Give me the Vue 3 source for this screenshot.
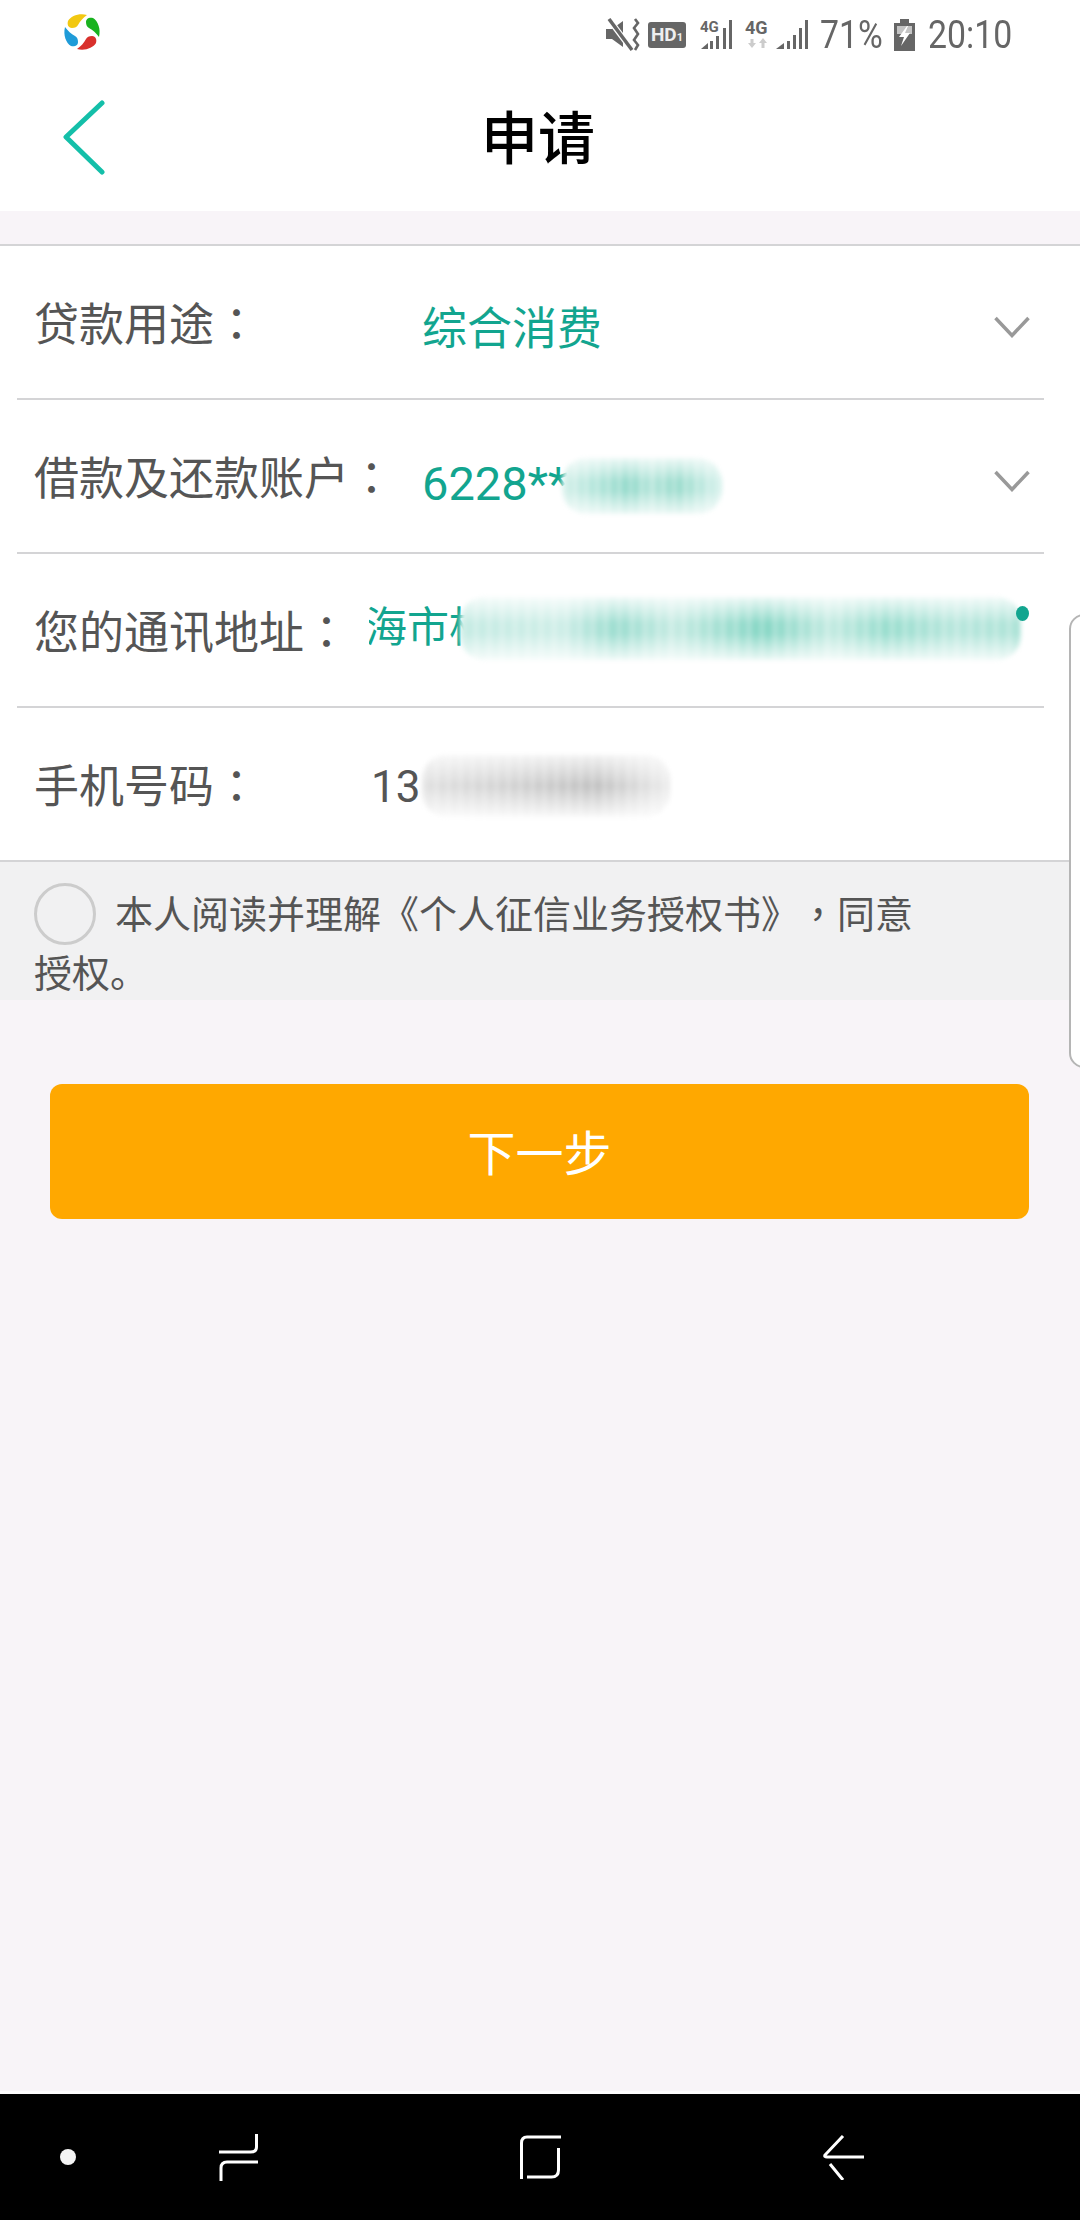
<script setup>
const rows = [
  { label: '贷款用途', value: '综合消费', kind: 'select' },
  { label: '借款及还款账户', value: '6228***', kind: 'select', num: true },
  { label: '您的通讯地址', value: '海市松', kind: 'address' },
  { label: '手机号码', value: '13', kind: 'phone' }
]
</script>

<template>
  <div class="page">
    <div class="status">
      <svg class="logo" viewBox="60 10 44 44">
        <path fill="#f2c811" d="M72 28C68 28 67 24 68 21C71 16 79 13 87 15C83 18 80 21 78 25C77 27 75 28 72 28Z" />
        <path fill="#19b21f" d="M86 22C86 18 90 17 93 18C98 21 101 29 99 37C96 33 93 30 89 28C87 27 86 25 86 22Z" />
        <path fill="#d9302c" d="M92 36C96 36 97 40 96 43C93 48 85 51 77 49C81 46 84 43 86 39C87 37 89 36 92 36Z" />
        <path fill="#1f9bd8" d="M78 42C78 46 74 47 71 46C66 43 63 35 65 27C68 31 71 34 75 36C77 37 78 39 78 42Z" />
      </svg>
      <div class="status-right">
        <svg class="ic-mute" width="35" height="34" viewBox="0 0 35 34">
          <path fill="#666" d="M1 11h6L18 3v26L7 21H1z" />
          <path stroke="#fff" stroke-width="6" d="M3 0l24 32" />
          <path stroke="#666" stroke-width="3.5" d="M4 1l23 31" />
          <path fill="none" stroke="#666" stroke-width="2.6" d="M30 1l3 4-4 5 4 6-4 6 4 5-3 5" />
        </svg>
        <div class="hd">HD<small>1</small></div>
        <svg class="ic-sig1" width="33" height="42" viewBox="0 -6 33 42">
          <text x="0" y="12" class="sig-text small">4G</text>
          <path fill="#666" d="M1 29l7-6v6z" />
          <path fill="#666" d="M10 21h3v8h-3zM16 16h3v13h-3zM23 8h3v21h-3zM29 0h3v29h-3z" />
        </svg>
        <svg class="ic-sig2" width="63" height="42" viewBox="0 -6 63 42">
          <text x="0" y="14" class="sig-text">4G</text>
          <path fill="#ccc" d="M7 28l-4-5h2.500v-4h3v4H11zM18 18l4 5h-2.500v5h-3v-5H14z" />
          <path fill="#666" d="M31 29l8-6v6z" />
          <path fill="#666" d="M42 21h3v8h-3zM48 15h3v14h-3zM54 8h3v21h-3zM60 0h3v29h-3z" />
        </svg>
        <div class="st-text pct"><span>71%</span></div>
        <svg class="ic-bat" width="22" height="32" viewBox="0 0 22 32">
          <path fill="#666" d="M6 0h9v4h6v28H0V4h6z" />
          <path fill="#c4c4c4" d="M3 7h15v8H3z" />
          <path fill="#fff" d="M13 7L5 18h5l-3 9 9-13h-5l3-7z" />
        </svg>
        <div class="st-text clock"><span>20:10</span></div>
      </div>
    </div>

    <header class="head">
      <svg class="back" width="44" height="76" viewBox="0 0 44 76">
        <path fill="none" stroke="#14bfa9" stroke-width="5" stroke-linecap="round" stroke-linejoin="round" d="M39 4L3 38l36 35" />
      </svg>
      <h1>申请</h1>
    </header>

    <section class="form">
      <div v-for="row in rows" :key="row.label" class="row" :class="row.kind">
        <div class="label">{{ row.label }}<span class="colon">：</span></div>
        <div class="value" :class="['v-' + row.kind, { 'v-num': row.num }]">
          <span>{{ row.value }}</span>
        </div>
        <svg v-if="row.kind === 'select'" class="chev" width="36" height="22" viewBox="0 0 36 22">
          <path fill="none" stroke="#999" stroke-width="3.5" d="M1.500 2L18 19.500 34.500 2" />
        </svg>
      </div>
    </section>

    <section class="notice">
      <i class="radio"></i>本人阅读并理解《个人征信业务授权书》<span class="colon">，</span>同意<br />授权。
    </section>

    <button class="next">下一步</button>

    <nav class="nav">
      <i class="dot"></i>
      <svg class="recents" width="40" height="47" viewBox="0 0 40 47">
        <path fill="none" stroke="#fff" stroke-width="3" d="M37.500 0v13q0 5-6 5H0M39 28H8q-6 0-6 6v13" />
      </svg>
      <svg class="home" width="41" height="45" viewBox="0 0 41 45">
        <path fill="none" stroke="#fff" stroke-width="3" d="M41 2H7Q1.500 2 1.500 8v36M38.500 13v22q0 7-7 7H7" />
      </svg>
      <svg class="goback" width="41" height="45" viewBox="0 0 41 45">
        <path fill="none" stroke="#fff" stroke-width="3" d="M20 1L2 20q-1 2 2 2h37M7 29l13 16" />
      </svg>
    </nav>

    <!-- scribbled-out details and the edge panel lie over the content -->
    <div class="smudge s-card"></div>
    <div class="smudge s-addr"></div>
    <i class="addr-dot"></i>
    <div class="smudge s-phone"></div>
    <div class="edge"></div>
  </div>
</template>

<style scoped>
.page {
  position: relative;
  width: 1080px;
  height: 2220px;
  display: flex;
  flex-direction: column;
  overflow: hidden;
  background: #f8f4f8;
  font-family: "Noto Sans CJK SC", Roboto, sans-serif;
}
.status {
  height: 64px;
  display: flex;
  align-items: center;
  justify-content: space-between;
  padding: 0 69px 0 60px;
  background: #fff;
  box-sizing: border-box;
}
.logo {
  width: 44px;
  height: 44px;
}
.status-right {
  display: flex;
  align-items: center;
  padding-top: 5px;
}
.ic-mute {
  margin-right: 8px;
}
.hd {
  width: 38px;
  height: 26px;
  margin-right: 14px;
  border-radius: 3px;
  background: #666;
  color: #eee;
  font: 700 19px/26px Roboto, sans-serif;
  text-align: center;
}
.hd small {
  font-size: 11px;
}
.ic-sig1 {
  margin-right: 12px;
}
.ic-sig2 {
  margin-right: 12px;
}
.sig-text {
  font: 700 18px Roboto, sans-serif;
  fill: #666;
}
.sig-text.small {
  font-size: 15px;
}
.st-text {
  font: 400 38px/40px Roboto, sans-serif;
  color: #666;
  white-space: nowrap;
}
.st-text span {
  display: inline-block;
  transform: scaleX(0.89);
  transform-origin: left center;
}
.pct {
  width: 61px;
  margin-right: 13px;
}
.ic-bat {
  margin-right: 12px;
}
.clock {
  width: 83px;
}
.head {
  height: 147px;
  display: flex;
  align-items: center;
  background: #fff;
  padding: 0 111px 8px 63px;
  box-sizing: border-box;
}
.back {
  flex: none;
  margin-top: 6px;
}
.head h1 {
  flex: 1;
  margin: 0;
  text-align: center;
  font-size: 57px;
  line-height: 70px;
  font-weight: 500;
  color: #000;
}
.form {
  margin-top: 33px;
  background: #fff;
  border-top: 2px solid #d4d4d6;
}
.row {
  height: 154px;
  margin: 0 36px 0 17px;
  padding-right: 14px;
  display: flex;
  align-items: center;
  border-bottom: 2px solid #d4d4d6;
  box-sizing: border-box;
}
.row:last-child {
  margin: 0;
  padding-left: 17px;
}
.label {
  flex: none;
  padding-left: 17px;
  font-size: 45px;
  line-height: 60px;
  color: #555;
  white-space: nowrap;
}
.colon {
  font-family: "Noto Sans CJK TC", sans-serif;
}
.value {
  font-family: Roboto, "Noto Sans CJK SC", sans-serif;
  white-space: nowrap;
  color: #12a58f;
  font-size: 45px;
  line-height: 60px;
}
.v-select {
  flex: 1;
  padding-top: 16px;
}
.v-num {
  font-size: 47px;
}
.select .label {
  width: 405px;
  box-sizing: border-box;
}
.v-address {
  width: 660px;
  margin-left: 20px;
  overflow: hidden;
  font-size: 42px;
  padding-bottom: 4px;
}
.v-address span {
  display: block;
  margin-left: -4px;
}
.v-phone {
  margin-left: 112px;
  color: #555;
  font-size: 44px;
  padding-top: 6px;
}
.chev {
  flex: none;
  margin-top: 10px;
}
.notice {
  height: 138px;
  padding: 20px 0 0 34px;
  box-sizing: border-box;
  background: #f1f1f2;
  color: #555;
  font-size: 38px;
  line-height: 59px;
  text-spacing-trim: space-all;
}
.radio {
  display: inline-block;
  width: 62px;
  height: 62px;
  margin: -12px 19px -4px 0;
  border: 3px solid #ccc;
  border-radius: 50%;
  box-sizing: border-box;
  vertical-align: middle;
}
.next {
  display: block;
  width: 979px;
  height: 135px;
  margin: 84px 0 0 50px;
  border: 0;
  padding: 0 0 4px;
  border-radius: 12px;
  background: #ffa800;
  color: #fff;
  font-family: "Noto Sans CJK SC", sans-serif;
  font-size: 48px;
}
.nav {
  margin-top: auto;
  height: 129px;
  display: flex;
  align-items: center;
  padding-left: 60px;
  background: #000;
  border-top: 3px solid #fdfcfd;
  box-sizing: border-box;
}
.dot {
  width: 16px;
  height: 16px;
  margin-right: 143px;
  border-radius: 50%;
  background: #f4f4f4;
}
.recents {
  margin-right: 261px;
}
.home {
  margin-right: 262px;
}
.smudge {
  position: absolute;
  border-radius: 24px;
  filter: blur(2px);
}
.s-card {
  left: 562px;
  top: 458px;
  width: 160px;
  height: 56px;
  background:
    linear-gradient(to bottom, rgba(255,255,255,.8), rgba(255,255,255,0) 42%, rgba(255,255,255,0) 58%, rgba(255,255,255,.8)),
    repeating-linear-gradient(to right, rgba(255,255,255,.22) 0 5px, rgba(255,255,255,0) 5px 11px),
    linear-gradient(to right, #d5f0ea, #b8e7dd 18%, #94dacb 42%, #b4e5da 55%, #9bdccd 72%, #d0efe9 96%);
}
.s-addr {
  left: 460px;
  top: 597px;
  width: 561px;
  height: 63px;
  background:
    linear-gradient(to bottom, rgba(255,255,255,.85), rgba(255,255,255,.1) 42%, rgba(255,255,255,.1) 58%, rgba(255,255,255,.85)),
    repeating-linear-gradient(to right, rgba(255,255,255,.2) 0 6px, rgba(255,255,255,0) 6px 13px),
    linear-gradient(to right, #bfe9e0, #c9ece5 18%, #90d9ca 28%, #c0e9e0 38%, #78d2be 54%, #bce8de 66%, #8edac9 76%, #b0e4d9 88%, #a4e0d3 100%);
}
.addr-dot {
  position: absolute;
  left: 1016px;
  top: 606px;
  width: 13px;
  height: 15px;
  border-radius: 50%;
  background: #12a58f;
}
.s-phone {
  left: 422px;
  top: 755px;
  width: 248px;
  height: 62px;
  background:
    linear-gradient(to bottom, rgba(255,255,255,.8), rgba(255,255,255,.05) 50%, rgba(255,255,255,.9)),
    repeating-linear-gradient(to right, rgba(255,255,255,.2) 0 5px, rgba(255,255,255,0) 5px 12px),
    linear-gradient(to right, #dedede, #cfcfcf 35%, #bdbdbd 70%, #e8e8e8 98%);
}
.edge {
  position: absolute;
  left: 1069px;
  top: 614px;
  width: 30px;
  height: 454px;
  box-sizing: border-box;
  border: 2px solid #b5b5b5;
  border-radius: 18px;
  background: #fff;
}
</style>
<style>
body {
  margin: 0;
}
</style>
